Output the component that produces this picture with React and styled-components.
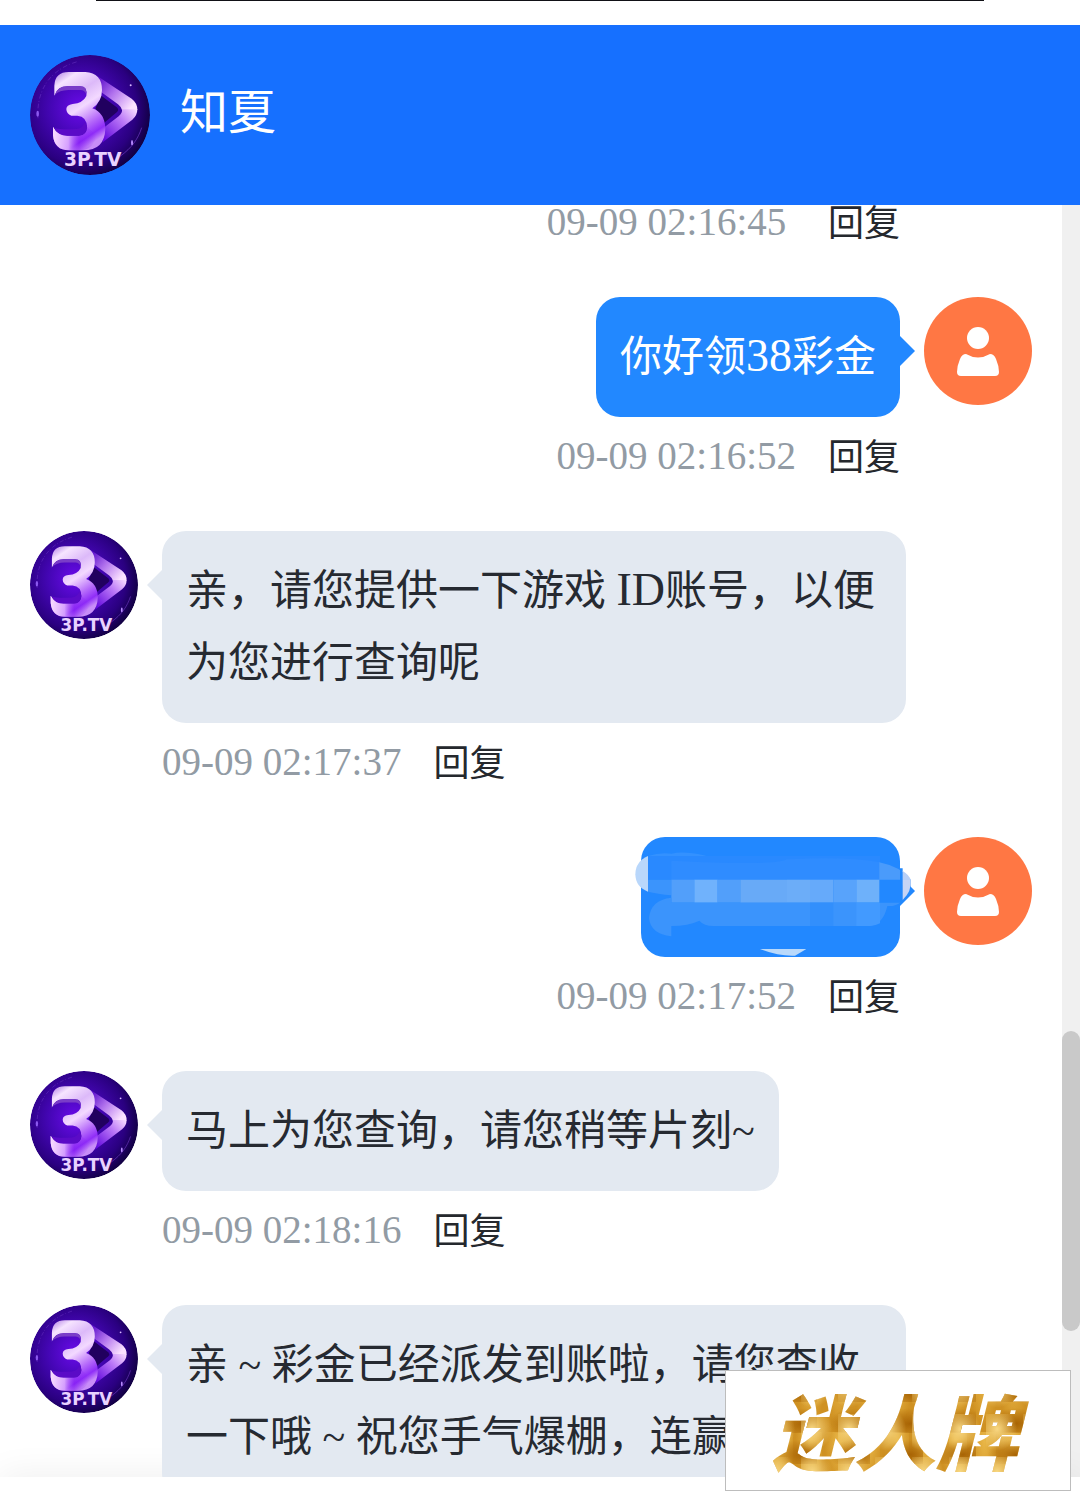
import React, { useId } from 'react';
import styled, { createGlobalStyle } from 'styled-components';

const messages = [
  { id: 1, mine: true, time: '09-09 02:16:45\u00a0', metaOnly: true },
  { id: 2, mine: true, time: '09-09 02:16:52', text: '你好领38彩金' },
  {
    id: 3,
    time: '09-09 02:17:37',
    text: '亲，请您提供一下游戏 ID账号，以便为您进行查询呢',
  },
  { id: 4, mine: true, time: '09-09 02:17:52', masked: true },
  { id: 5, time: '09-09 02:18:16', text: '马上为您查询，请您稍等片刻~' },
  {
    id: 6,
    text: '亲 ~ 彩金已经派发到账啦，请您查收一下哦 ~ 祝您手气爆棚，连赢',
  },
];

const App = () => {
  return (
    <>
      <GlobalStyle />
      <Page>
        <TopStrip />
        <Header>
          <Logo size={120} />
          <AgentName>知夏</AgentName>
        </Header>
        <ChatArea>
          <MessageList>
            {messages.map(message => (
              <Message key={message.id} message={message} />
            ))}
          </MessageList>
          <ScrollTrack>
            <ScrollThumb />
          </ScrollTrack>
        </ChatArea>
        <Footer />
        <Stamp>
          <StampText>迷人牌</StampText>
        </Stamp>
      </Page>
    </>
  );
};

const Message = ({ message }) => {
  const { mine, text, time, masked, metaOnly } = message;

  return (
    <Row $mine={mine}>
      {!metaOnly && (mine ? <UserIcon /> : <Logo size={108} />)}
      <Body $mine={mine} $metaOnly={metaOnly}>
        {!metaOnly && (
          <Bubble $mine={mine} $masked={masked}>
            {masked ? <Mosaic /> : <MessageText text={text} />}
          </Bubble>
        )}
        {time && (
          <Meta $first={metaOnly}>
            <Time>{time}</Time>
            <ReplyButton type="button">回复</ReplyButton>
          </Meta>
        )}
      </Body>
    </Row>
  );
};

//영문, 숫자는 한자보다 조금 크게
const MessageText = ({ text }) =>
  text
    .split(/([A-Za-z0-9]+)/)
    .map((part, i) => (i % 2 ? <Latin key={i}>{part}</Latin> : part));

const Logo = ({ size }) => {
  const id = useId().replace(/[^a-zA-Z0-9]/g, '');

  return (
    <LogoSvg width={size} height={size} viewBox="0 0 360 360">
      <defs>
        <radialGradient id={`${id}bg`} cx="42%" cy="44%" r="60%">
          <stop offset="0" stopColor="#6a0bea" />
          <stop offset="0.42" stopColor="#4406b4" />
          <stop offset="0.78" stopColor="#2a0080" />
          <stop offset="1" stopColor="#100040" />
        </radialGradient>
        <linearGradient id={`${id}three`} x1="0.1" y1="0" x2="0.55" y2="1">
          <stop offset="0" stopColor="#b98be8" />
          <stop offset="0.14" stopColor="#f6e4ff" />
          <stop offset="0.36" stopColor="#dcb9f9" />
          <stop offset="0.54" stopColor="#f3d9ff" />
          <stop offset="0.76" stopColor="#b66bfa" />
          <stop offset="0.9" stopColor="#8f2df8" />
          <stop offset="1" stopColor="#c88df8" />
        </linearGradient>
        <linearGradient id={`${id}foot`} x1="0" y1="0" x2="1" y2="0">
          <stop offset="0" stopColor="#f9dcff" />
          <stop offset="0.35" stopColor="#e2b5ff" stopOpacity="0.8" />
          <stop offset="0.6" stopColor="#7d12f0" stopOpacity="0.4" />
          <stop offset="1" stopColor="#7d12f0" stopOpacity="0" />
        </linearGradient>
        <linearGradient id={`${id}up`} x1="0" y1="0" x2="1" y2="0.7">
          <stop offset="0" stopColor="#5405c7" />
          <stop offset="0.5" stopColor="#b273ee" />
          <stop offset="1" stopColor="#fbe2ff" />
        </linearGradient>
        <linearGradient id={`${id}down`} x1="1" y1="0" x2="0" y2="0.9">
          <stop offset="0" stopColor="#fbe2ff" />
          <stop offset="0.4" stopColor="#bd7bf8" />
          <stop offset="1" stopColor="#6207dd" />
        </linearGradient>
      </defs>
      <circle cx="180" cy="180" r="180" fill={`url(#${id}bg)`} />
      <path
        d="M24 190C18 105 62 42 142 20"
        fill="none"
        stroke="#8850dc"
        strokeWidth="3"
        strokeDasharray="14 5 3 8"
        opacity="0.35"
      />
      <path
        d="M335 218C324 252 306 278 270 304"
        fill="none"
        stroke="#8e4ee9"
        strokeWidth="3"
        opacity="0.5"
      />
      <ellipse cx="23" cy="176" rx="4" ry="9" fill="#8c59ef" />
      <ellipse cx="306" cy="263" rx="3" ry="8" fill="#b78bff" />
      <circle cx="302" cy="91" r="3" fill="#d8b9ff" />
      <path
        d="M203 64L305 131Q323 145 322 165H276Q274 156 264 148L206 106Z"
        fill={`url(#${id}up)`}
      />
      <path
        d="M322 163Q322 182 307 194L218 262L224 216L266 184Q278 174 276 163Z"
        fill={`url(#${id}down)`}
      />
      <path
        d="M214 122L262 158Q267 165 261 171L222 204L196 160Z"
        fill="#21005f"
      />
      <path
        d="M73 122V92Q75 51 116 51H166Q216 54 216 105Q216 140 187 160Q225 174 226 221Q224 286 160 286H117Q73 286 69 240V216Q82 242 112 242H146Q171 241 171 217Q171 185 142 182H124Q109 176 109 162Q109 150 128 147Q159 144 169 123Q174 94 150 94H112Q83 94 73 122Z"
        fill={`url(#${id}three)`}
      />
      <path
        d="M69 216Q82 242 112 242H146Q171 241 171 217L200 240Q190 286 150 286H117Q73 286 69 240Z"
        fill={`url(#${id}foot)`}
      />
      <path
        d="M75 119Q88 106 115 105H151Q164 106 168 116Q172 94 150 94H112Q83 94 75 119Z"
        fill="#7a3dc8"
      />
      <path
        d="M72 218Q91 224 139 222Q158 221 164 202Q173 213 171 220Q166 242 146 242H112Q84 242 72 218Z"
        fill="#5b0bc7"
      />
      <LogoText x="188" y="334" textAnchor="middle">
        3P.TV
      </LogoText>
    </LogoSvg>
  );
};

const UserIcon = () => (
  <IconSvg width="108" height="108" viewBox="0 0 108 108">
    <circle cx="54" cy="54" r="54" fill="#ff7744" />
    <circle cx="54" cy="41" r="11" fill="#ffffff" />
    <path
      d="M42 57Q54 64 66 57Q70 57 72 62Q75 69 75 75Q75 79 71 79H37Q33 79 33 75Q33 69 36 62Q38 57 42 57Z"
      fill="#ffffff"
    />
  </IconSvg>
);

const Mosaic = () => (
  <MosaicSvg width="259" height="120" viewBox="63 51 777 360">
    <path d="M84 108Q46 125 46 163Q47 202 84 215Z" fill="#b9d7fb" />
    <path d="M84 108Q120 96 155 101Q190 92 258 107L240 112H84Z" fill="#3391ff" />
    <path d="M84 108H780V179H84Z" fill="#2989ff" />
    <path d="M84 179H154V226Q112 222 84 215Z" fill="#3b94fc" />
    <path d="M154 122Q470 138 500 118Q680 108 780 127V179H154Z" fill="#2f8cff" />
    <path d="M778 127Q842 140 872 179H778Z" fill="#4a9bfb" />
    <path d="M840 145H848V179H872V213L883 213L840 256Z" fill="#2288fc" />
    <path d="M848 153Q868 165 872 180H848Z" fill="#b6cff7" />
    <path d="M848 180H872Q876 213 848 240Z" fill="#c6d5f5" />
    <path d="M154 179H223V248H154Z" fill="#529ffa" />
    <path d="M223 179H293V248H223Z" fill="#70b2fc" />
    <path d="M293 179H361V248H293Z" fill="#529ffa" />
    <path d="M361 179H501V248H361Z" fill="#68aaf7" />
    <path d="M501 179H570V248H501Z" fill="#6cadf8" />
    <path d="M570 179H640V248H570Z" fill="#66aafa" />
    <path d="M640 179H709V248H640Z" fill="#58a3fb" />
    <path d="M709 179H778V248H709Z" fill="#6eb1fa" />
    <path
      d="M154 233Q91 240 87 295Q92 342 154 349V318Q205 318 238 302Q252 318 280 318H750Q790 312 802 258Q824 260 840 248H154Z"
      fill="#3b94fc"
    />
    <path d="M570 248H640V318H570Z" fill="#328ffc" />
    <path d="M709 248H780V310Q765 318 750 318H709Z" fill="#429aff" />
    <path d="M420 387H559L525 407Q475 409 420 387Z" fill="#b9d9fb" />
  </MosaicSvg>
);

const GlobalStyle = createGlobalStyle`
  * {
    box-sizing: border-box;
  }

  body {
    margin: 0;
    background: #ffffff;
    font-family: 'Liberation Serif', 'Noto Sans CJK SC', serif;
  }
`;

const Page = styled.div`
  position: relative;
  display: flex;
  flex-direction: column;
  height: 100vh;
  overflow: hidden;
`;

const TopStrip = styled.div`
  flex: none;
  height: 25px;
  padding: 0 96px;

  &::before {
    content: '';
    display: block;
    height: 1px;
    background: #111116;
  }
`;

const Header = styled.header`
  display: flex;
  flex: none;
  align-items: center;
  gap: 30px;
  padding: 30px;
  background: #1670ff;
`;

const AgentName = styled.h1`
  margin: 0;
  padding-bottom: 4px;
  font-weight: 400;
  font-size: 48px;
  line-height: 68px;
  color: #ffffff;
`;

const ChatArea = styled.main`
  display: flex;
  flex: 1;
  min-height: 0;
`;

const MessageList = styled.div`
  flex: 1;
  padding: 0 30px;
  overflow: hidden;
`;

const Row = styled.div`
  display: flex;
  flex-direction: ${props => (props.$mine ? 'row-reverse' : 'row')};
  gap: 24px;
  margin-bottom: 54px;
`;

const Body = styled.div`
  display: flex;
  flex: 1;
  flex-direction: column;
  align-items: ${props => (props.$mine ? 'flex-end' : 'flex-start')};
  min-width: 0;
  padding: ${props => (props.$mine ? '0 0 0 126px' : '0 126px 0 0')};
  margin-right: ${props => (props.$metaOnly ? '132px' : 0)};
`;

const Bubble = styled.div`
  position: relative;
  padding: ${props => (props.$masked ? 0 : '24px')};
  border-radius: 24px;
  background: ${props => (props.$mine ? '#2288ff' : '#e3e9f1')};
  font-size: 42px;
  line-height: 72px;
  color: ${props => (props.$mine ? '#ffffff' : '#262a31')};

  &::before {
    content: '';
    position: absolute;
    top: 39px;
    ${props => (props.$mine ? 'left: 100%' : 'right: 100%')};
    width: 15px;
    height: 30px;
    background: inherit;
    clip-path: ${props =>
      props.$mine
        ? 'polygon(0 0, 100% 50%, 0 100%)'
        : 'polygon(100% 0, 0 50%, 100% 100%)'};
  }
`;

const Latin = styled.span`
  font-size: 46px;
  line-height: 1;
`;

const Meta = styled.div`
  display: flex;
  align-items: flex-start;
  gap: 32px;
  height: 38px;
  margin-top: ${props => (props.$first ? 0 : '22px')};
`;

const Time = styled.time`
  font-size: 39px;
  line-height: 34px;
  color: #929ba4;
`;

const ReplyButton = styled.button`
  padding: 0;
  border: 0;
  background: none;
  font-family: inherit;
  font-size: 36px;
  line-height: 38px;
  color: #25282d;
  cursor: pointer;
`;

const ScrollTrack = styled.div`
  display: grid;
  flex: none;
  grid-template-rows: 826fr 300fr 146fr;
  width: 18px;
  background: #f0f0f0;
`;

const ScrollThumb = styled.div`
  grid-row: 2;
  border-radius: 9px;
  background: #c9c9c9;
`;

const Footer = styled.footer`
  flex: none;
  height: 28px;
  background: #ffffff;
  box-shadow: 0 0 36px rgba(0, 0, 0, 0.08);
`;

const Stamp = styled.aside`
  position: absolute;
  right: 9px;
  bottom: 14px;
  padding: 0 38px;
  border: 1px solid #bdbdbd;
  background: #ffffff;
`;

const StampText = styled.span`
  display: block;
  padding: 0 14px 4px 8px;
  font-family: 'Noto Sans CJK SC', sans-serif;
  font-style: italic;
  font-weight: 900;
  font-size: 82px;
  line-height: 115px;
  color: transparent;
  background-color: #cf9122;
  background-image:
    radial-gradient(ellipse at 30% 35%, #f8d883 0, transparent 55%),
    radial-gradient(ellipse at 75% 70%, #a86405 0, transparent 50%),
    radial-gradient(ellipse at 60% 15%, #e9b748 0, transparent 60%);
  background-size: 37px 43px, 53px 31px, 29px 61px;
  background-clip: text;
  -webkit-background-clip: text;
`;

const LogoSvg = styled.svg`
  flex: none;
  border-radius: 50%;
`;

const LogoText = styled.text`
  font-family: 'DejaVu Sans', sans-serif;
  font-weight: 700;
  font-size: 56px;
  fill: #e9d2ff;
`;

const IconSvg = styled.svg`
  flex: none;
`;

const MosaicSvg = styled.svg`
  position: relative;
  display: block;
  overflow: visible;
`;

export default App;
